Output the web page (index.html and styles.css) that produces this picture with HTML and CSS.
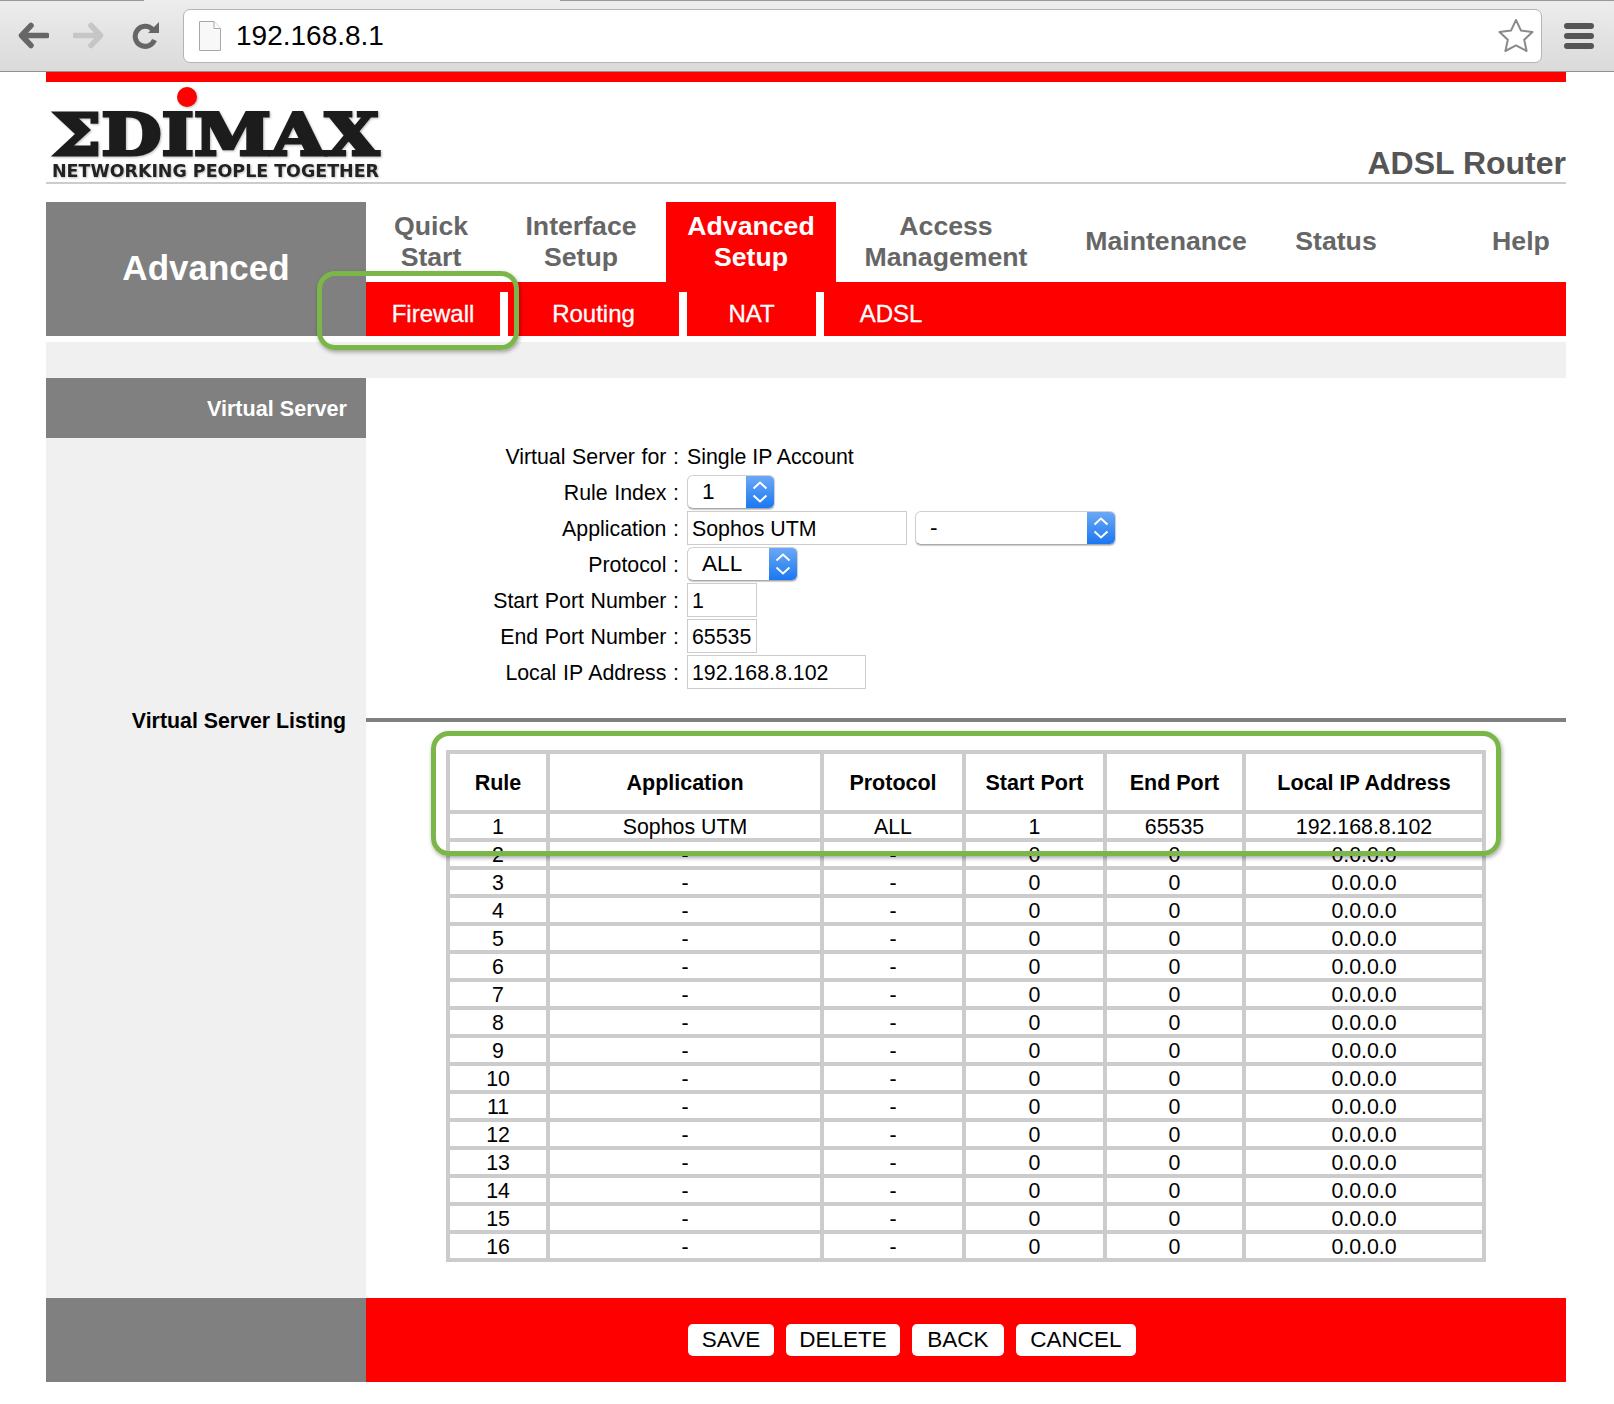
FILE: index.html
```html
<!DOCTYPE html>
<html lang="en">
<head>
  <meta charset="UTF-8">
  <title>ADSL Router</title>
  <link rel="stylesheet" href="styles.css">
</head>
<body>

  <!-- Browser toolbar -->
  <div class="toolbar">
    <div class="tabstrip"><span class="strip_left"></span><span class="strip_right"></span></div>
    <div class="toolbar_row">
      <svg class="nav_icon" viewBox="0 0 31 27"><path d="M13 3.5 3.5 13.5 13 23.5M5 13.5H29" fill="none" stroke="#666" stroke-width="5.5" stroke-linecap="round" stroke-linejoin="round"/></svg>
      <svg class="nav_icon forward" viewBox="0 0 31 27"><path d="M18 3.5 27.5 13.5 18 23.5M26 13.5H2" fill="none" stroke="#c6c6c6" stroke-width="5.5" stroke-linecap="round" stroke-linejoin="round"/></svg>
      <svg class="nav_icon reload" viewBox="0 0 27 27"><path d="M20.5 7.5A10 10 0 1 0 22.5 18" fill="none" stroke="#666" stroke-width="5"/><path d="M16 11 27 11 27 0Z" fill="#666"/></svg>
      <div class="url_box">
        <svg class="page_icon" viewBox="0 0 22 30"><path d="M.5.5H15L21.5 7.5V29.5H.5Z" fill="#f8f8f8" stroke="#a8a8a8"/><path d="M15 .5V7.5H21.5" fill="#fff" stroke="#a8a8a8"/></svg>
        <span class="url_text">192.168.8.1</span>
        <svg class="star_icon" viewBox="0 0 36 35"><path d="M18 2 23 12.6 34.5 14 26.2 21.8 28.6 33 18 27.4 7.4 33 9.8 21.8 1.5 14 13 12.6Z" fill="#fff" stroke="#8a8a8a" stroke-width="2" stroke-linejoin="round"/></svg>
      </div>
      <div class="menu_icon"><span></span><span></span><span></span></div>
    </div>
  </div>

  <div class="page">
    <div class="top_red"></div>

    <!-- Logo -->
    <div class="header">
      <svg class="logo" viewBox="0 0 340 100">
        <text class="logo_word" x="6" y="73" textLength="327" lengthAdjust="spacingAndGlyphs">ΣDIMAX</text>
        <circle cx="141" cy="15" r="10" fill="#f00"/>
        <text class="logo_tag" x="6" y="95" textLength="327" lengthAdjust="spacingAndGlyphs">NETWORKING PEOPLE TOGETHER</text>
      </svg>
      <div class="product">ADSL Router</div>
    </div>

    <!-- Menu -->
    <div class="nav">
      <div class="nav_title">Advanced</div>
      <div class="nav_menu">
        <div class="tabs">
          <div class="tab tab_quick">Quick<br>Start</div>
          <div class="tab tab_interface">Interface<br>Setup</div>
          <div class="tab tab_advanced">Advanced<br>Setup</div>
          <div class="tab tab_access">Access<br>Management</div>
          <div class="tab tab_maint">Maintenance</div>
          <div class="tab tab_status">Status</div>
          <div class="tab tab_help">Help</div>
        </div>
        <div class="subtabs">
          <div class="subtab sub_firewall">Firewall</div>
          <div class="subtab sub_routing">Routing</div>
          <div class="subtab sub_nat">NAT</div>
          <div class="subtab sub_adsl">ADSL</div>
        </div>
      </div>
    </div>

    <div class="band"></div>

    <div class="main">
      <div class="side"><div class="side_head">Virtual Server</div></div>
      <div class="form">
        <div class="form_row form_first"><div class="label">Virtual Server for :</div><div class="value">Single IP Account</div></div>
        <div class="form_row">
          <div class="label">Rule Index :</div>
          <div class="select sel_rule"><span>1</span><div class="sel_arrow"><svg viewBox="0 0 16 26"><path d="M1.5 9.5 8 3.5 14.5 9.5M1.5 16.5 8 22.5 14.5 16.5" fill="none" stroke="#fff" stroke-width="2"/></svg></div></div>
        </div>
        <div class="form_row">
          <div class="label">Application :</div>
          <input class="field field_app" type="text" value="Sophos UTM">
          <div class="select sel_app"><span>-</span><div class="sel_arrow"><svg viewBox="0 0 16 26"><path d="M1.5 9.5 8 3.5 14.5 9.5M1.5 16.5 8 22.5 14.5 16.5" fill="none" stroke="#fff" stroke-width="2"/></svg></div></div>
        </div>
        <div class="form_row">
          <div class="label">Protocol :</div>
          <div class="select sel_proto"><span>ALL</span><div class="sel_arrow"><svg viewBox="0 0 16 26"><path d="M1.5 9.5 8 3.5 14.5 9.5M1.5 16.5 8 22.5 14.5 16.5" fill="none" stroke="#fff" stroke-width="2"/></svg></div></div>
        </div>
        <div class="form_row"><div class="label">Start Port Number :</div><input class="field field_port" type="text" value="1"></div>
        <div class="form_row"><div class="label">End Port Number :</div><input class="field field_port" type="text" value="65535"></div>
        <div class="form_row"><div class="label">Local IP Address :</div><input class="field field_ip" type="text" value="192.168.8.102"></div>
      </div>

      <div class="side"><div class="side_label">Virtual Server Listing</div></div>
      <div class="listing">
        <div class="rule"></div>
        <table class="rules">
          <tr class="head"><th class="c1">Rule</th><th class="c2">Application</th><th class="c3">Protocol</th><th class="c4">Start Port</th><th class="c5">End Port</th><th class="c6">Local IP Address</th></tr>
          <tr><td>1</td><td>Sophos UTM</td><td>ALL</td><td>1</td><td>65535</td><td>192.168.8.102</td></tr>
          <tr><td>2</td><td>-</td><td>-</td><td>0</td><td>0</td><td>0.0.0.0</td></tr>
          <tr><td>3</td><td>-</td><td>-</td><td>0</td><td>0</td><td>0.0.0.0</td></tr>
          <tr><td>4</td><td>-</td><td>-</td><td>0</td><td>0</td><td>0.0.0.0</td></tr>
          <tr><td>5</td><td>-</td><td>-</td><td>0</td><td>0</td><td>0.0.0.0</td></tr>
          <tr><td>6</td><td>-</td><td>-</td><td>0</td><td>0</td><td>0.0.0.0</td></tr>
          <tr><td>7</td><td>-</td><td>-</td><td>0</td><td>0</td><td>0.0.0.0</td></tr>
          <tr><td>8</td><td>-</td><td>-</td><td>0</td><td>0</td><td>0.0.0.0</td></tr>
          <tr><td>9</td><td>-</td><td>-</td><td>0</td><td>0</td><td>0.0.0.0</td></tr>
          <tr><td>10</td><td>-</td><td>-</td><td>0</td><td>0</td><td>0.0.0.0</td></tr>
          <tr><td>11</td><td>-</td><td>-</td><td>0</td><td>0</td><td>0.0.0.0</td></tr>
          <tr><td>12</td><td>-</td><td>-</td><td>0</td><td>0</td><td>0.0.0.0</td></tr>
          <tr><td>13</td><td>-</td><td>-</td><td>0</td><td>0</td><td>0.0.0.0</td></tr>
          <tr><td>14</td><td>-</td><td>-</td><td>0</td><td>0</td><td>0.0.0.0</td></tr>
          <tr><td>15</td><td>-</td><td>-</td><td>0</td><td>0</td><td>0.0.0.0</td></tr>
          <tr><td>16</td><td>-</td><td>-</td><td>0</td><td>0</td><td>0.0.0.0</td></tr>
        </table>
      </div>
    </div>

    <div class="footer">
      <div class="foot_grey"></div>
      <div class="foot_red">
        <button class="but but_save">SAVE</button>
        <button class="but but_delete">DELETE</button>
        <button class="but but_back">BACK</button>
        <button class="but but_cancel">CANCEL</button>
      </div>
    </div>
  </div>

  <!-- Green annotation boxes drawn over the page -->
  <div class="mark mark_firewall"></div>
  <div class="mark mark_table"></div>

</body>
</html>
```

FILE: styles.css
```css
:root {
  --vermelho: #f00;
  --cinza: #808080;
  --cinza-claro: #f0f0f0;
  --borda: #ccc;
  --verde: #7ab648;
}

body {
  margin: 0;
  background: #fff;
  color: #000;
  font-family: "Liberation Sans", Arial, sans-serif;
  font-size: 21.33px;
}

/* browser toolbar */
.toolbar {
  height: 71px;
  background: linear-gradient(#ededed, #dadada);
  border-bottom: 1px solid #909090;
}

.tabstrip {
  display: flex;
  justify-content: space-between;
  height: 1px;
}

.strip_left {
  width: 144px;
  background: #999;
}

.strip_right {
  width: 1054px;
  background: #999;
}

.toolbar_row {
  display: flex;
  align-items: center;
  height: 69px;
  padding: 0 20px 0 18px;
}

.nav_icon {
  width: 31px;
  height: 27px;
  flex: none;
}

.forward {
  margin-left: 24px;
}

.reload {
  width: 27px;
  margin-left: 28px;
}

.url_box {
  flex: 1;
  display: flex;
  align-items: center;
  height: 52px;
  margin: 0 22px 0 24px;
  padding: 0 7px 0 15px;
  background: #fff;
  border: 1px solid #b4b4b4;
  border-radius: 7px;
}

.page_icon {
  width: 22px;
  height: 30px;
  flex: none;
}

.url_text {
  margin-left: 15px;
  font-size: 28px;
}

.star_icon {
  width: 36px;
  height: 35px;
  margin-left: auto;
}

.menu_icon {
  display: flex;
  flex-direction: column;
  gap: 4px;
  width: 30px;
}

.menu_icon span {
  height: 6px;
  background: #555;
  border-radius: 3px;
}

/* page */
.page {
  width: 1520px;
  margin-left: 46px;
}

.top_red {
  height: 10px;
  background: var(--vermelho);
}

.header {
  display: flex;
  justify-content: space-between;
  align-items: flex-end;
  height: 100px;
  border-bottom: 2px solid var(--borda);
}

.logo {
  width: 340px;
  height: 100px;
  filter: drop-shadow(1px 1px 1px #bbb);
}

.logo_word {
  font-family: "DejaVu Serif", serif;
  font-weight: bold;
  font-size: 57px;
  fill: #1c1c1c;
  stroke: #1c1c1c;
  stroke-width: 3px;
}

.logo_tag {
  font-family: "DejaVu Sans", sans-serif;
  font-weight: bold;
  font-size: 17px;
  fill: #222;
}

.product {
  color: #555;
  font-size: 32px;
  font-weight: bold;
  line-height: 36px;
  margin-bottom: 1px;
}

/* menu */
.nav {
  display: flex;
  height: 134px;
  margin-top: 18px;
}

.nav_title {
  display: flex;
  align-items: center;
  justify-content: center;
  flex: none;
  box-sizing: border-box;
  width: 320px;
  padding-bottom: 2px;
  background: var(--cinza);
  color: #fff;
  font-size: 35px;
  font-weight: bold;
}

.nav_menu {
  flex: 1;
}

.tabs {
  display: flex;
  height: 80px;
}

.tab {
  display: flex;
  align-items: center;
  justify-content: center;
  text-align: center;
  color: #666;
  font-size: 26.67px;
  font-weight: bold;
  line-height: 31px;
  box-sizing: border-box;
}

.tab_quick { width: 130px; }
.tab_interface { width: 170px; }
.tab_advanced { width: 170px; background: var(--vermelho); color: #fff; }
.tab_access { width: 220px; }
.tab_maint { width: 220px; padding-bottom: 1px; }
.tab_status { width: 120px; padding-bottom: 1px; }
.tab_help { width: 90px; margin-left: auto; padding-bottom: 1px; }

.subtabs {
  display: flex;
  height: 54px;
  padding-top: 10px;
  box-sizing: border-box;
  background: var(--vermelho);
}

.subtab {
  display: flex;
  align-items: center;
  justify-content: center;
  box-sizing: border-box;
  color: #fff;
  font-size: 24px;
  -webkit-text-stroke: 0.3px #fff;
  border-right: 8px solid #fff;
}

.sub_firewall { width: 142px; }
.sub_routing { width: 179px; }
.sub_nat { width: 137px; }
.sub_adsl { width: 134px; border-right: none; }

.band {
  height: 36px;
  margin-top: 6px;
  background: var(--cinza-claro);
}

/* main area */
.main {
  display: grid;
  grid-template-columns: 320px 1fr;
}

.side {
  background: var(--cinza-claro);
}

.side_head {
  height: 60px;
  padding-right: 19px;
  background: var(--cinza);
  color: #fff;
  font-size: 21.6px;
  font-weight: bold;
  line-height: 62px;
  text-align: right;
}

.side_label {
  padding-right: 20px;
  font-size: 21.33px;
  font-weight: bold;
  line-height: 33px;
  text-align: right;
}

.form {
  padding: 60px 0 14px;
}

.form_row {
  display: flex;
  align-items: flex-start;
  gap: 8px;
  height: 36px;
  line-height: 36px;
}

.form_first {
  height: 37px;
  line-height: 38px;
}

.label {
  flex: none;
  width: 313px;
  text-align: right;
  white-space: nowrap;
  word-spacing: 0.7px;
  box-sizing: border-box;
}

.field {
  box-sizing: border-box;
  height: 34px;
  padding: 2px 4px 0;
  border: 1px solid var(--borda);
  background: #fff;
  color: #000;
  font: inherit;
  outline: none;
}

.field_app { width: 220px; }
.field_port { width: 70px; }
.field_ip { width: 179px; }

.select {
  display: flex;
  align-items: center;
  justify-content: space-between;
  box-sizing: border-box;
  height: 34px;
  padding-left: 14px;
  background: #fff;
  border: 1px solid #d0d0d0;
  border-bottom-color: #aaa;
  border-radius: 6px;
  box-shadow: 0 1px 1px rgba(0, 0, 0, 0.2);
  font-size: 22.6px;
  overflow: hidden;
}

.sel_rule { width: 88px; }
.sel_app { width: 201px; }
.sel_proto { width: 111px; }

.sel_arrow {
  display: flex;
  align-items: center;
  justify-content: center;
  width: 28px;
  height: 34px;
  background: linear-gradient(#6eaaf5, #1876f2);
}

.sel_arrow svg {
  width: 16px;
  height: 26px;
}

.listing {
  padding-top: 13px;
}

.rule {
  height: 4px;
  background: var(--cinza);
}

.rules {
  margin: 28px 0 36px 80px;
  border-collapse: separate;
  border-spacing: 4px;
  background: var(--borda);
  table-layout: fixed;
  width: 1040px;
}

.rules th,
.rules td {
  box-sizing: border-box;
  padding: 2px 0 0;
  background: #fff;
  text-align: center;
  height: 24px;
  line-height: 22px;
}

.rules th {
  height: 56px;
  font-size: 21.5px;
}

.c1 { width: 96px; }
.c2 { width: 270px; }
.c3 { width: 138px; }
.c4 { width: 137px; }
.c5 { width: 135px; }
.c6 { width: 236px; }

/* footer */
.footer {
  display: flex;
  height: 84px;
}

.foot_grey {
  flex: none;
  width: 320px;
  background: var(--cinza);
}

.foot_red {
  flex: 1;
  display: flex;
  align-items: center;
  gap: 12px;
  padding-left: 322px;
  background: var(--vermelho);
}

.but {
  height: 32px;
  padding: 0;
  background: #fff;
  color: #000;
  border: none;
  border-radius: 5px;
  font-family: inherit;
  font-size: 22.5px;
}

.but_save { width: 86px; }
.but_delete { width: 114px; }
.but_back { width: 92px; }
.but_cancel { width: 120px; }

/* annotations */
.mark {
  position: absolute;
  box-sizing: border-box;
  border: 5px solid var(--verde);
  border-radius: 18px;
  box-shadow: 1px 2px 4px rgba(0, 0, 0, 0.35);
}

.mark_firewall {
  left: 317px;
  top: 271px;
  width: 202px;
  height: 79px;
}

.mark_table {
  left: 431px;
  top: 731px;
  width: 1070px;
  height: 125px;
}
```
